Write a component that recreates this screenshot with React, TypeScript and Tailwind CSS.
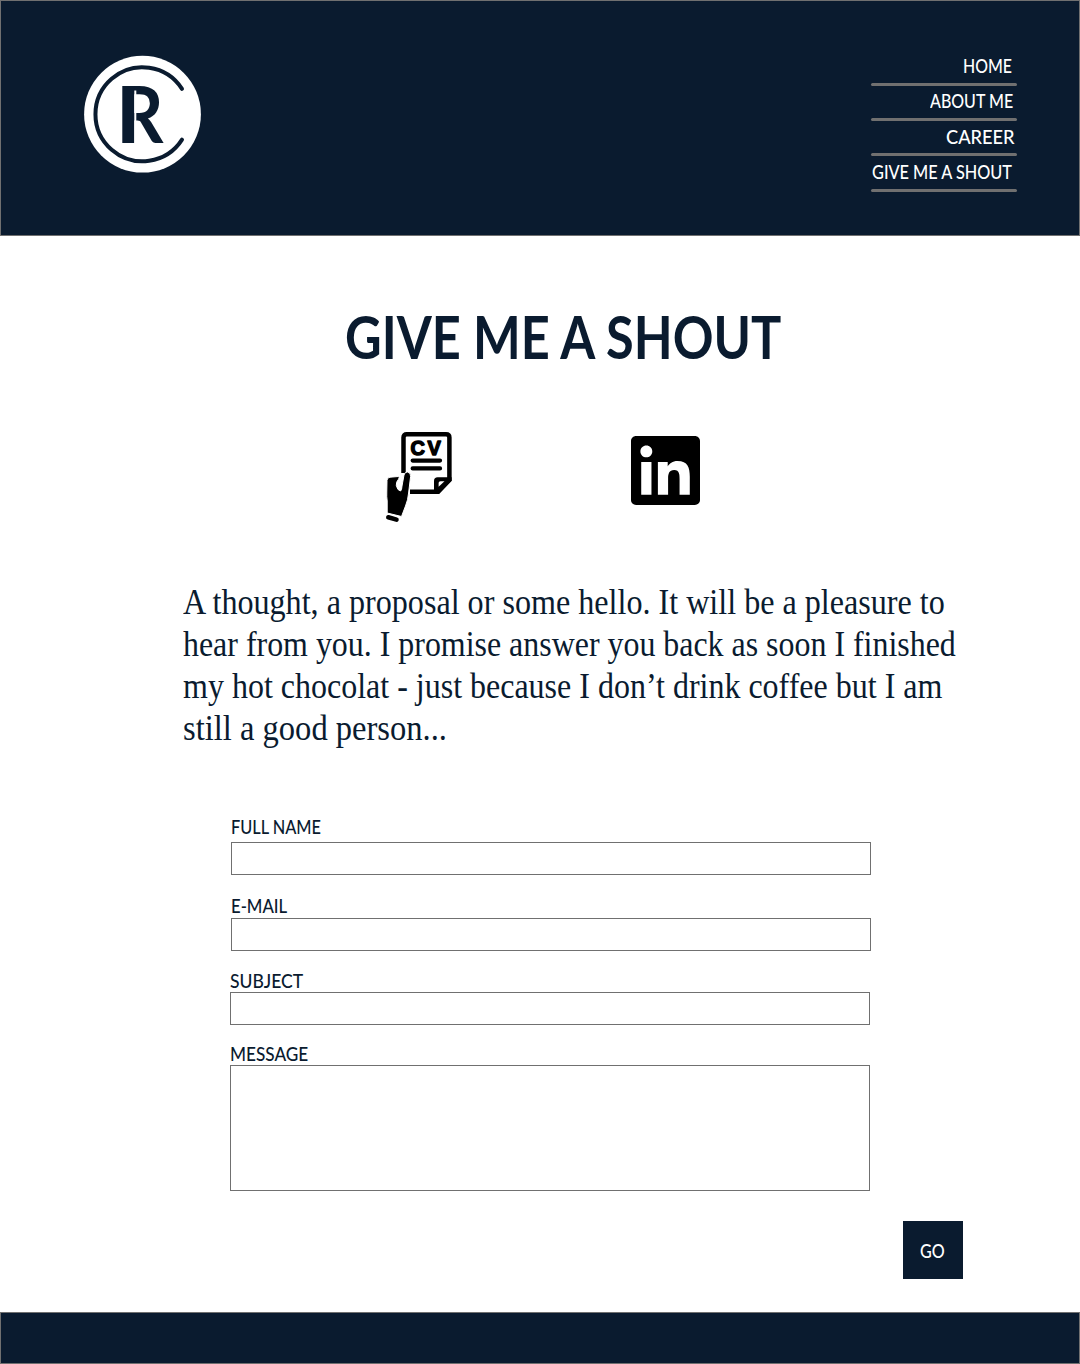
import { useLayoutEffect, useRef, useState } from 'react';

type FitProps = { text: string; box: string; className?: string };

/** One line of text, condensed or widened so that it fills its box exactly. */
function FitLine({ text, box, className = '' }: FitProps) {
  const outer = useRef<HTMLSpanElement>(null);
  const inner = useRef<HTMLSpanElement>(null);
  const [scale, setScale] = useState(1);

  useLayoutEffect(() => {
    if (outer.current && inner.current) {
      setScale(outer.current.offsetWidth / inner.current.offsetWidth);
    }
  }, [text]);

  return (
    <span ref={outer} className={`block whitespace-nowrap ${box}`}>
      <span
        ref={inner}
        className={`inline-block origin-left align-top ${className}`}
        style={{ transform: `scaleX(${scale})` }}
      >
        {text}
      </span>
    </span>
  );
}

function Logo() {
  return (
    <svg viewBox="0 0 118 118" className="h-[118px] w-[118px]" role="img" aria-label="CR">
      <circle cx="58.5" cy="59.2" r="58.4" fill="#fff" />
      <path d="M98 33.800A47 47 0 1 0 98 84.600" fill="none" stroke="#0a1b2f" strokeWidth="4" strokeLinecap="round" />
      <text
        x="34.5"
        y="88"
        fontFamily="Lato, sans-serif"
        fontWeight="700"
        fontSize="79"
        textLength="45"
        lengthAdjust="spacingAndGlyphs"
        fill="#0a1b2f"
      >
        R
      </text>
      {/* heavy stem, set apart from the bowl by a hairline */}
      <rect x="38.3" y="31" width="12" height="57" fill="#0a1b2f" />
      <rect x="50.3" y="35.5" width="2" height="53" fill="#fff" />
    </svg>
  );
}

function CvIcon() {
  return (
    <svg viewBox="0 0 66 92" className="h-[92px] w-[66px] overflow-visible" role="img" aria-label="CV">
      <path
        d="M17.500 42V6.500Q17.500 3.200 20.800 3.200H60Q63.400 3.200 63.400 6.500V49L52 60.700H24"
        fill="none"
        stroke="#000"
        strokeWidth="4.500"
      />
      <path d="M48 63V50Q48 46.300 51.700 46.300H65.600V49.500L53 63Z" fill="#000" />
      <path d="M52.600 55.800V52Q52.600 50.200 54.500 50.200H58.500Z" fill="#fff" />
      <path d="M26.700 29.600H54M26.700 37.400H54" stroke="#000" strokeWidth="4.300" strokeLinecap="round" />
      <text
        x="24.400 41.600"
        y="23.700"
        fontFamily="Liberation Sans, Arial, sans-serif"
        fontWeight="700"
        fontSize="20"
        stroke="#000"
        strokeWidth="1.400"
        strokeLinejoin="round"
      >
        CV
      </text>
      <path
        d="M1 49.500Q1 46.500 4 46.200L12.500 45.500Q14 46.500 12.300 48.500Q10 51 10.300 54.500Q11.500 59.500 14.500 60Q15.800 59.500 16 55L18 44Q18.800 40.800 21.500 41Q25 41.700 24.600 45.500L22.600 62Q22 69 19.500 75L15.500 85.500L1.200 82V70Q0.500 66 0.800 60Z"
        fill="#000"
        stroke="#fff"
        strokeWidth="1"
      />
      <path d="M2.300 86.300L10.500 88.600" stroke="#000" strokeWidth="4.600" strokeLinecap="round" />
    </svg>
  );
}

function LinkedInIcon() {
  return (
    <svg viewBox="0 0 24 24" className="h-[69px] w-[69px]" role="img" aria-label="LinkedIn">
      <path d="M20.447 20.452h-3.554v-5.569c0-1.328-.027-3.037-1.852-3.037-1.853 0-2.136 1.445-2.136 2.939v5.667H9.351V9h3.414v1.561h.046c.477-.9 1.637-1.85 3.37-1.85 3.601 0 4.267 2.37 4.267 5.455v6.286zM5.337 7.433c-1.144 0-2.063-.926-2.063-2.065 0-1.138.92-2.063 2.063-2.063 1.14 0 2.064.925 2.064 2.063 0 1.139-.925 2.065-2.064 2.065zm1.782 13.019H3.555V9h3.564v11.452zM22.225 0H1.771C.792 0 0 .774 0 1.729v20.542C0 23.227.792 24 1.771 24h20.451C23.2 24 24 23.227 24 22.271V1.729C24 .774 23.2 0 22.222 0h.003z" />
    </svg>
  );
}

const nav = [
  { text: 'HOME', box: 'w-[49px] mr-[5px]' },
  { text: 'ABOUT ME', box: 'w-[83px] mr-[4px]' },
  { text: 'CAREER', box: 'w-[69px] mr-[2px]' },
  { text: 'GIVE ME A SHOUT', box: 'w-[140px] mr-[5px]' },
];

const message = [
  { text: 'A thought, a proposal or some hello. It will be a pleasure to', box: 'w-[762px]' },
  { text: 'hear from you. I promise answer you back as soon I finished', box: 'w-[773px]' },
  { text: 'my hot chocolat - just because I don’t drink coffee but I am', box: 'w-[759px]' },
  { text: 'still a good person...', box: 'w-[264px]' },
];

const fields = [
  { text: 'FULL NAME', box: 'w-[90px]', row: 'ml-[231px]', label: 'leading-5', input: 'mt-[5px] h-[33px]' },
  { text: 'E-MAIL', box: 'w-[56px]', row: 'ml-[231px] mt-[22px]', label: 'leading-[18px]', input: 'mt-px h-[33px]' },
  { text: 'SUBJECT', box: 'w-[73px]', row: 'ml-[230px] mt-[21px]', label: 'leading-[18px]', input: 'h-[33px]' },
  { text: 'MESSAGE', box: 'w-[78px]', row: 'ml-[230px] mt-[20px]', label: 'leading-[18px]', input: 'h-[126px]' },
];

export default function App() {
  return (
    <div className="flex h-[1364px] w-[1080px] flex-col bg-white font-['Lato',sans-serif] text-[#0a1b2f]">
      <header className="flex h-[236px] shrink-0 justify-between border border-[#707070] bg-[#0a1b2f] pt-[54px] pr-[62px] pl-[83px] text-white">
        <Logo />
        <nav className="flex w-[146px] flex-col">
          {nav.map((item) => (
            <a key={item.text} href="#" className="flex h-[35.33px] flex-col items-end">
              <FitLine text={item.text} box={`h-[27.6px] ${item.box}`} className="text-[18.5px] leading-[22px] font-medium" />
              <span className="h-[3px] w-full shrink-0 rounded-full bg-[#707070]" />
            </a>
          ))}
        </nav>
      </header>

      <main className="flex flex-1 flex-col">
        <h1 className="mt-[64px] ml-[345px] h-[74px]">
          <FitLine text="GIVE ME A SHOUT" box="w-[436px]" className="text-[60px] leading-[72px] font-bold" />
        </h1>

        <div className="mt-[57px] ml-[386px] flex h-[92px] gap-[179px]">
          <CvIcon />
          <a href="#" className="mt-[5px]">
            <LinkedInIcon />
          </a>
        </div>

        <p className="mt-[58px] ml-[183px] font-['Liberation_Serif',serif]">
          {message.map((line) => (
            <FitLine key={line.text} text={line.text} box={`h-[42px] ${line.box}`} className="text-[36px] leading-[42px]" />
          ))}
        </p>

        <form className="mt-[68px] flex flex-col">
          {fields.map((field) => (
            <label key={field.text} className={`block w-[640px] ${field.row}`}>
              <FitLine text={field.text} box={`h-5 ${field.box}`} className={`text-[18.5px] font-medium ${field.label}`} />
              {field.text === 'MESSAGE' ? (
                <textarea className={`block w-full resize-none border border-[#707070] ${field.input}`} />
              ) : (
                <input className={`block w-full border border-[#707070] ${field.input}`} />
              )}
            </label>
          ))}
          <button type="button" className="mt-[30px] ml-[903px] flex h-[58px] w-[60px] items-center justify-center bg-[#0a1b2f] pr-[2px] text-white">
            <FitLine text="GO" box="w-[25px]" className="text-[20px] leading-6 font-medium" />
          </button>
        </form>
      </main>

      <footer className="h-[52px] shrink-0 border border-[#707070] bg-[#0a1b2f]" />
    </div>
  );
}
